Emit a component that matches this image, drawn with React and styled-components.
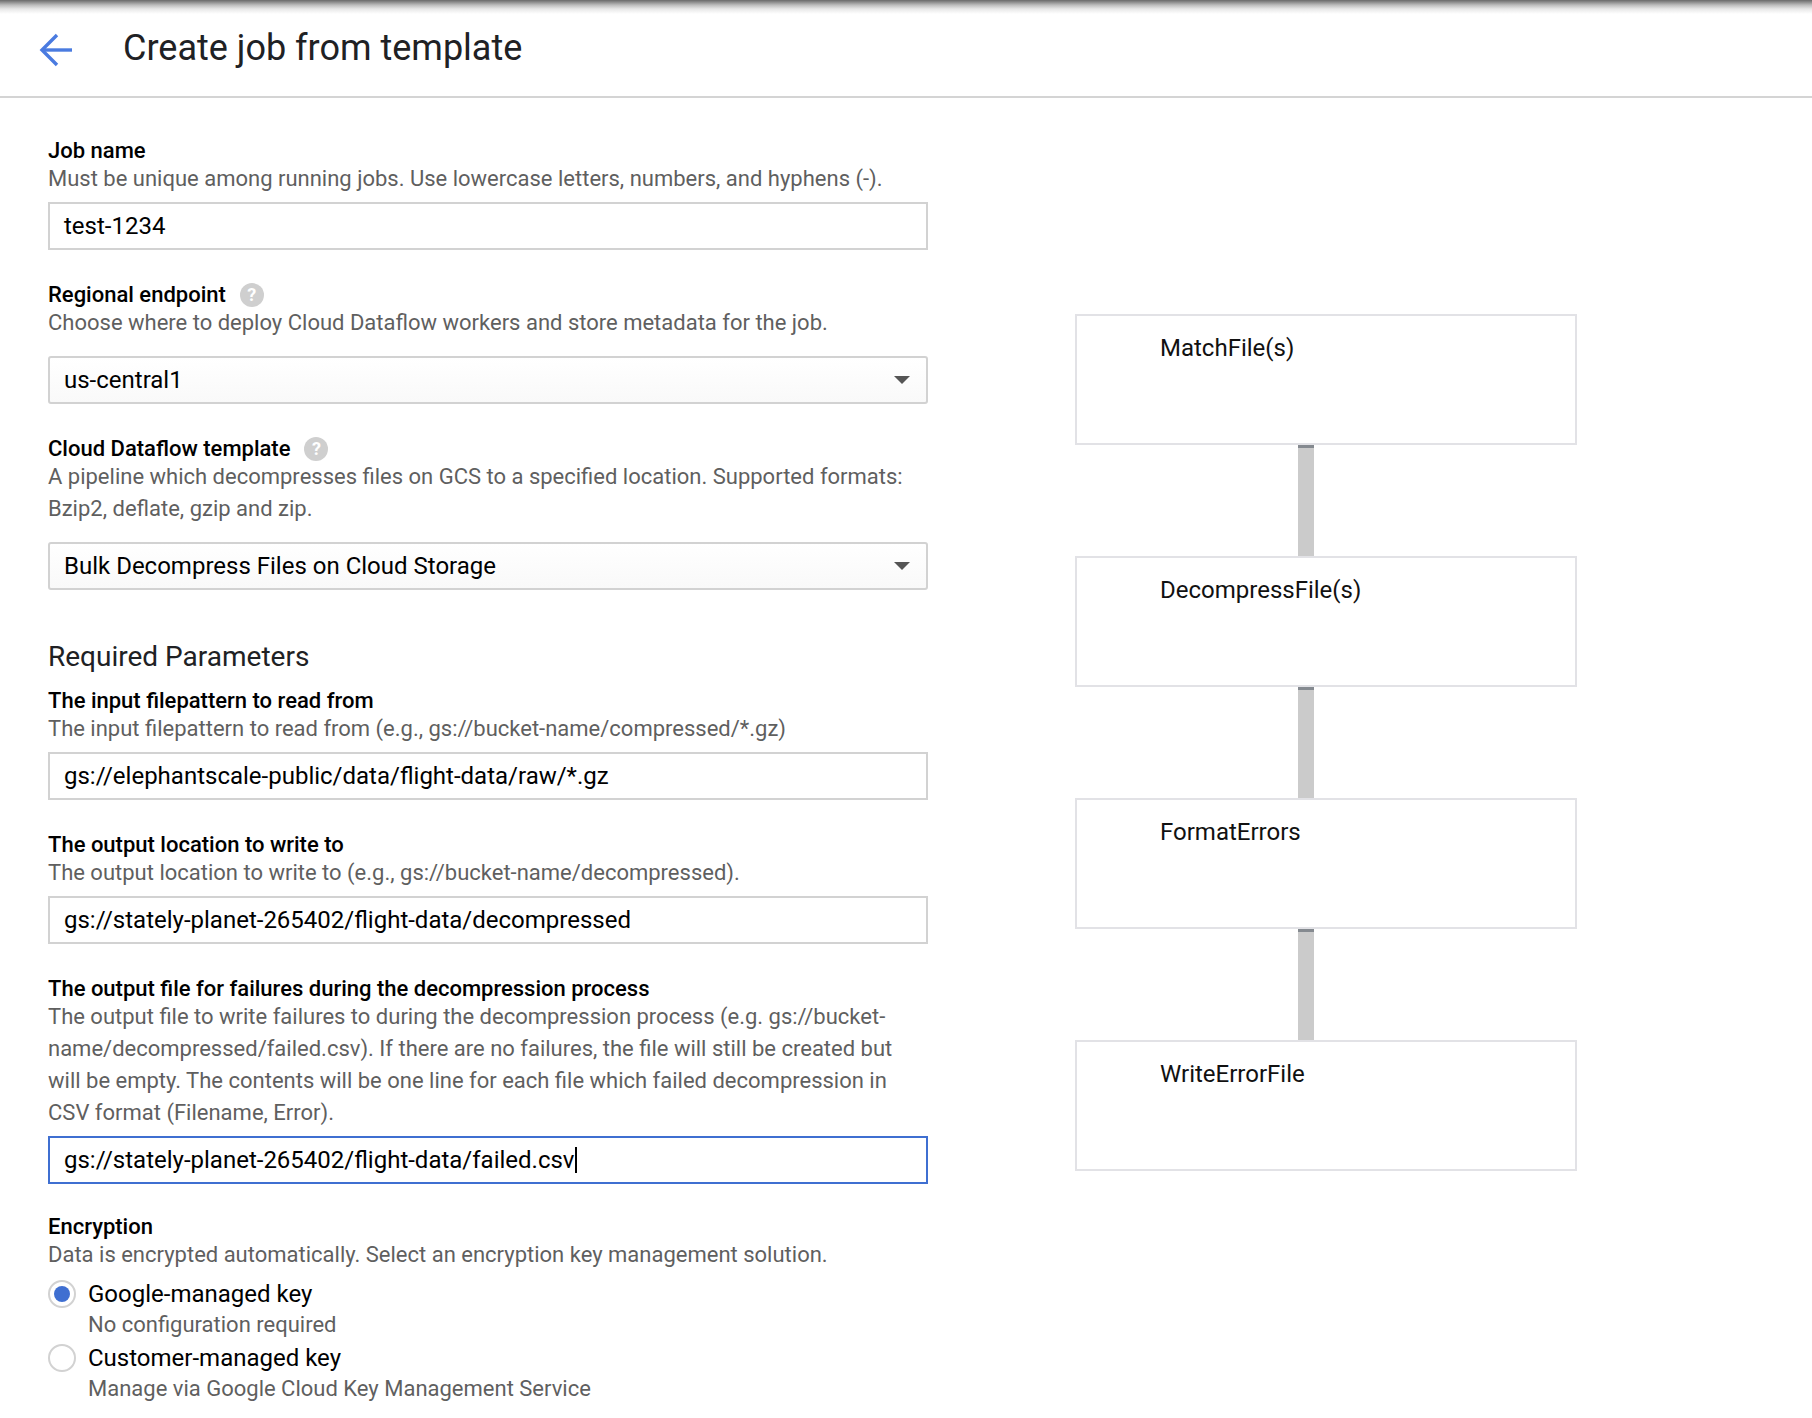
import React from "react";
import styled, { createGlobalStyle } from "styled-components";

const Global = createGlobalStyle`
  html, body { margin: 0; padding: 0; background: #fff; }
  body { font-family: Roboto, "Liberation Sans", sans-serif; color: #000; }
`;
const Page = styled.div`
  width: 1812px;
  height: 1418px;
  overflow: hidden;
  position: relative;
  background: #fff;
`;
const TopShadow = styled.div`
  height: 14px;
  margin-bottom: -14px;
  background: linear-gradient(#6a6a6a 0, #8a8a8a 2px, #bcbcbc 5px, #e8e8e8 9px, #fff 14px);
`;
const Header = styled.header`
  height: 98px;
  box-sizing: border-box;
  border-bottom: 2px solid #d4d4d4;
  display: flex;
  align-items: center;
  padding: 0 0 0 39px;
`;
const BackIcon = styled.svg`
  width: 36px;
  height: 36px;
  flex: none;
  margin: 3px 48px 0 0;
`;
const Title = styled.h1`
  margin: 0;
  font-size: 36px;
  font-weight: 400;
  line-height: 44px;
  color: #202124;
`;
const Main = styled.main`
  display: flex;
  align-items: flex-start;
  padding: 40px 0 0 48px;
`;
const Form = styled.div`
  width: 880px;
  flex: none;
`;
const Field = styled.section`
  margin-bottom: ${(p) => p.$after ?? 32}px;
`;
const LabelRow = styled.div`
  display: flex;
  align-items: center;
  gap: 14px;
  height: 25px;
`;
const Label = styled.div`
  font-size: 22px;
  font-weight: 500;
  line-height: 25px;
  color: #000;
`;
const Help = styled.span`
  width: 24px;
  height: 24px;
  border-radius: 50%;
  background: #cfcfcf;
  color: #fff;
  font-size: 18px;
  font-weight: 700;
  line-height: 24px;
  text-align: center;
`;
const Desc = styled.div`
  font-size: 22px;
  line-height: 32px;
  color: #5f5f5f;
`;
const InputBox = styled.div`
  box-sizing: border-box;
  height: 48px;
  margin-top: 7px;
  border: 2px solid ${(p) => (p.$focused ? "#3f6fd1" : "#d2d2d2")};
  padding: 0 14px;
  display: flex;
  align-items: center;
  font-size: 24px;
  color: #000;
  background: #fff;
`;
const Caret = styled.span`
  display: inline-block;
  width: 2px;
  height: 26px;
  background: #000;
`;
const SelectBox = styled(InputBox)`
  justify-content: space-between;
  border-radius: 3px;
  margin-top: 17px;
  padding-right: 13px;
  background: linear-gradient(#ffffff, #f9f9f9);
`;
const SelectArrow = styled.span`
  width: 0;
  height: 0;
  margin-right: 3px;
  border-left: 8px solid transparent;
  border-right: 8px solid transparent;
  border-top: 8px solid #555;
`;
const SectionTitle = styled.h2`
  margin: 0 0 13px;
  font-size: 28px;
  font-weight: 400;
  line-height: 36px;
  color: #202124;
`;
const RadioRow = styled.div`
  display: flex;
  gap: 12px;
  margin-top: ${(p) => p.$top}px;
`;
const Radio = styled.span`
  box-sizing: border-box;
  flex: none;
  width: 28px;
  height: 28px;
  margin-top: 1px;
  border-radius: 50%;
  border: 2px solid #d2d2d2;
  background: #fff;
  display: flex;
  align-items: center;
  justify-content: center;
`;
const RadioDot = styled.span`
  width: 16px;
  height: 16px;
  border-radius: 50%;
  background: #3f6fd1;
`;
const RadioTitle = styled.div`
  font-size: 24px;
  line-height: 31px;
  color: #000;
`;
const RadioHint = styled(Desc)`
  line-height: 30px;
`;
const Graph = styled.div`
  width: 502px;
  flex: none;
  margin: 176px 0 0 147px;
`;
const Node = styled.div`
  box-sizing: border-box;
  height: 131px;
  border: 2px solid #e2e2e6;
  padding: 17px 0 0 83px;
  font-size: 24px;
  line-height: 30px;
  color: #111;
`;
const Edge = styled.div`
  box-sizing: border-box;
  width: 16px;
  height: 111px;
  margin-left: 223px;
  background: #cbcbcb;
  border-top: 3px solid #858a90;
`;

const nodes = ["MatchFile(s)", "DecompressFile(s)", "FormatErrors", "WriteErrorFile"];

export default function App() {
  return (
    <Page>
      <Global />
      <TopShadow />
      <Header>
        <BackIcon viewBox="0 0 36 36" fill="none" stroke="#4a7be0" strokeWidth="3.4">
          <path d="M33 18H5" />
          <path d="M18 3 3 18l15 15" />
        </BackIcon>
        <Title>Create job from template</Title>
      </Header>
      <Main>
        <Form>
          <Field>
            <LabelRow><Label>Job name</Label></LabelRow>
            <Desc>Must be unique among running jobs. Use lowercase letters, numbers, and hyphens (-).</Desc>
            <InputBox>test-1234</InputBox>
          </Field>
          <Field>
            <LabelRow><Label>Regional endpoint</Label><Help>?</Help></LabelRow>
            <Desc>Choose where to deploy Cloud Dataflow workers and store metadata for the job.</Desc>
            <SelectBox>us-central1<SelectArrow /></SelectBox>
          </Field>
          <Field $after={49}>
            <LabelRow><Label>Cloud Dataflow template</Label><Help>?</Help></LabelRow>
            <Desc>A pipeline which decompresses files on GCS to a specified location. Supported formats: Bzip2, deflate, gzip and zip.</Desc>
            <SelectBox>Bulk Decompress Files on Cloud Storage<SelectArrow /></SelectBox>
          </Field>
          <SectionTitle>Required Parameters</SectionTitle>
          <Field>
            <LabelRow><Label>The input filepattern to read from</Label></LabelRow>
            <Desc>The input filepattern to read from (e.g., gs://bucket-name/compressed/*.gz)</Desc>
            <InputBox>gs://elephantscale-public/data/flight-data/raw/*.gz</InputBox>
          </Field>
          <Field>
            <LabelRow><Label>The output location to write to</Label></LabelRow>
            <Desc>The output location to write to (e.g., gs://bucket-name/decompressed).</Desc>
            <InputBox>gs://stately-planet-265402/flight-data/decompressed</InputBox>
          </Field>
          <Field $after={30}>
            <LabelRow><Label>The output file for failures during the decompression process</Label></LabelRow>
            <Desc>The output file to write failures to during the decompression process (e.g. gs://bucket-name/decompressed/failed.csv). If there are no failures, the file will still be created but will be empty. The contents will be one line for each file which failed decompression in CSV format (Filename, Error).</Desc>
            <InputBox $focused>gs://stately-planet-265402/flight-data/failed.csv<Caret /></InputBox>
          </Field>
          <Field>
            <LabelRow><Label>Encryption</Label></LabelRow>
            <Desc>Data is encrypted automatically. Select an encryption key management solution.</Desc>
            <RadioRow $top={8}>
              <Radio><RadioDot /></Radio>
              <div>
                <RadioTitle>Google-managed key</RadioTitle>
                <RadioHint>No configuration required</RadioHint>
              </div>
            </RadioRow>
            <RadioRow $top={3}>
              <Radio />
              <div>
                <RadioTitle>Customer-managed key</RadioTitle>
                <RadioHint>Manage via Google Cloud Key Management Service</RadioHint>
              </div>
            </RadioRow>
          </Field>
        </Form>
        <Graph>
          {nodes.map((n, i) => (
            <React.Fragment key={n}>
              <Node>{n}</Node>
              {i < nodes.length - 1 && <Edge />}
            </React.Fragment>
          ))}
        </Graph>
      </Main>
    </Page>
  );
}
